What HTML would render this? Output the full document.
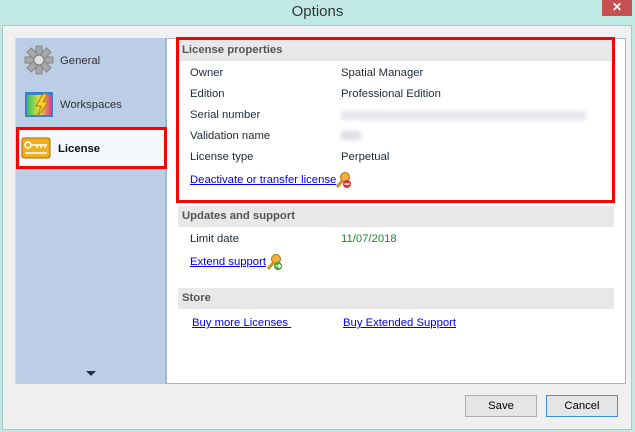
<!DOCTYPE html>
<html><head><style>
body{margin:0;width:635px;height:432px;background:#c0e9e3;font-family:"Liberation Sans",sans-serif;font-size:11.3px;color:#1e2a3a;position:relative;overflow:hidden}
.a{position:absolute}
.t{position:absolute;white-space:nowrap;line-height:14px}
a{color:#0000ee;text-decoration:underline}
.hd{position:absolute;left:178px;width:436px;height:21px;background:#e8e8e8;font-weight:bold;color:#555;}
.hd span{position:absolute;left:4px;top:4px}
.btn{position:absolute;top:395px;width:70px;height:20px;border:1px solid #adadad;background:#e5e5e5;text-align:center;line-height:20px;color:#000}
</style></head><body>
<div class="t" style="left:0;width:635px;top:3px;text-align:center;font-size:15px;line-height:18px;color:#333">Options</div>
<div class="a" style="left:602px;top:0;width:30px;height:16px;background:#c75050;color:#fff;text-align:center;font-size:12px;line-height:15px;font-weight:bold">✕</div>
<div class="a" style="left:2px;top:25px;width:628px;height:403px;background:#f0f0f0;border:1px solid #a8c8c4"></div>
<div class="a" style="left:15px;top:38px;width:150px;height:346px;background:#bccee6;border-left:1px solid #d0dcec"></div>
<div class="a" style="left:165px;top:38px;width:458px;height:344px;background:#fff;border:1px solid #a3b7d0;border-left:2px solid #a3b7d0"></div>
<svg class="a" style="left:23px;top:44px" width="32" height="32" viewBox="0 0 32 32"><g fill="#a8a8a8" stroke="#888"><circle cx="16" cy="16" r="10"/><rect x="13" y="2" width="6" height="28"/><rect x="2" y="13" width="28" height="6"/><rect x="13" y="2" width="6" height="28" transform="rotate(45 16 16)"/><rect x="13" y="2" width="6" height="28" transform="rotate(-45 16 16)"/></g><circle cx="16" cy="16" r="5" fill="#e0e0e0" stroke="#777"/></svg>
<div class="t" style="left:60px;top:54px;color:#333">General</div>
<svg class="a" style="left:24px;top:89px" width="30" height="30"><rect x="1" y="3" width="28" height="25" fill="#3a7fd0"/><rect x="3" y="6" width="24" height="20" fill="url(#g)"/><defs><linearGradient id="g" x1="0" x2="1"><stop offset="0" stop-color="#30c060"/><stop offset=".5" stop-color="#e0e040"/><stop offset="1" stop-color="#e04080"/></linearGradient></defs><path d="M19 5 L12 17 H17 L13 28 L24 13 H19 L23 5Z" fill="#f8d030" stroke="#b08010"/></svg>
<div class="t" style="left:60px;top:98px;color:#333">Workspaces</div>
<div class="a" style="left:16px;top:127px;width:145px;height:36px;background:#f4f7fc;border:3px solid #f00"></div>
<svg class="a" style="left:21px;top:137px" width="30" height="22"><rect x="1" y="1" width="28" height="20" rx="2" fill="#f0b020" stroke="#a07000"/><circle cx="7" cy="8" r="3" fill="none" stroke="#fff" stroke-width="1.5"/><path d="M10 8H26M16 8v3M20 8v3M24 8v3M4 16H26" stroke="#fff" stroke-width="1.5"/></svg>
<div class="t" style="left:58px;top:142px;font-weight:bold;color:#111">License</div>
<div class="a" style="left:86px;top:371px;width:0;height:0;border-left:5px solid transparent;border-right:5px solid transparent;border-top:5px solid #1e3050"></div>
<div class="hd" style="top:40px"><span>License properties</span></div>
<div class="a" style="left:176px;top:37px;width:433px;height:160px;border:3px solid #f00"></div>
<div class="t" style="left:190px;top:66px">Owner</div><div class="t" style="left:341px;top:66px">Spatial Manager</div>
<div class="t" style="left:190px;top:87px">Edition</div><div class="t" style="left:341px;top:87px">Professional Edition</div>
<div class="t" style="left:190px;top:108px">Serial number</div><div class="a" style="left:341px;top:111px;width:245px;height:9px;background:#e4e6ea;filter:blur(2px)"></div>
<div class="t" style="left:190px;top:129px">Validation name</div><div class="a" style="left:341px;top:131px;width:20px;height:9px;background:#dcdee2;filter:blur(2px)"></div>
<div class="t" style="left:190px;top:150px">License type</div><div class="t" style="left:341px;top:150px">Perpetual</div>
<div class="t" style="left:190px;top:173px"><a>Deactivate or transfer license</a></div>
<svg class="a" style="left:334px;top:171px" width="18" height="18"><circle cx="11" cy="6" r="4.5" fill="#f0b040" stroke="#b07010"/><path d="M9 9 L3 16" stroke="#d09020" stroke-width="3"/><circle cx="13" cy="13" r="4" fill="#e03030"/><rect x="10.5" y="12.3" width="5" height="1.5" fill="#fff"/></svg>
<div class="hd" style="top:206px"><span>Updates and support</span></div>
<div class="t" style="left:190px;top:232px">Limit date</div><div class="t" style="left:341px;top:232px;color:#1a8a2a">11/07/2018</div>
<div class="t" style="left:190px;top:255px"><a>Extend support</a></div>
<svg class="a" style="left:265px;top:253px" width="18" height="18"><circle cx="11" cy="6" r="4.5" fill="#f0b040" stroke="#b07010"/><path d="M9 9 L3 16" stroke="#d09020" stroke-width="3"/><circle cx="13" cy="13" r="4" fill="#40a030"/><path d="M10.5 13H15M13.5 11l2 2-2 2" stroke="#fff" stroke-width="1.3" fill="none"/></svg>
<div class="hd" style="top:288px"><span>Store</span></div>
<div class="t" style="left:192px;top:316px"><a>Buy more Licenses&nbsp;</a></div>
<div class="t" style="left:343px;top:316px"><a>Buy Extended Support</a></div>
<div class="btn" style="left:465px">Save</div>
<div class="btn" style="left:546px;border-color:#3c8ee8">Cancel</div>
</body></html>
